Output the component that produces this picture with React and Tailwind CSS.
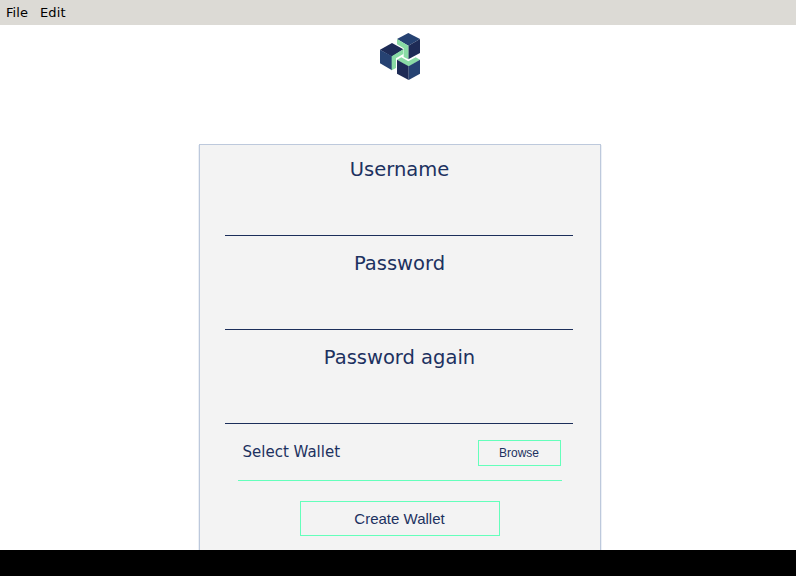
function Logo() {
  return (
    <svg className="block h-[47px] w-10" viewBox="24 20 120 141">
      <path fill="#264272" d="M109 20 144 38 109 58 75 38Z" />
      <path fill="#1e2b56" d="M144 38V80L109 99V58Z" />
      <path fill="#8adba5" d="M75 38 109 58V99L95 92V66L75 54Z" />
      <path fill="#1e2b56" d="M60 50 94 69 60 91 24 70Z" />
      <path fill="#264272" d="M24 70 60 90V132L24 111Z" />
      <path fill="#8adba5" d="M59 90 94 69V83L72 96V125L59 132Z" />
      <path fill="#8adba5" d="M75 100 88 93 109 105 131 93 144 100 110 121Z" />
      <path fill="#1e2b56" d="M75 100 110 120V161L75 142Z" />
      <path fill="#264272" d="M144 100V142L110 161V120Z" />
    </svg>
  );
}

function Field({ label, type = "text" }) {
  return (
    <label className="flex h-[94px] flex-col pt-[13px] text-center text-[19.5px] leading-6">
      <span className="pl-px">{label}</span>
      <input
        type={type}
        className="mt-auto mb-[3px] h-10 w-full border-b border-[#1c2e5a] bg-transparent outline-none"
      />
    </label>
  );
}

export default function App() {
  return (
    <div className="flex h-[576px] w-[796px] flex-col overflow-hidden bg-black font-['DejaVu_Sans',sans-serif]">
      <nav className="flex h-[25px] shrink-0 gap-3 bg-[#dcdad5] pl-1.5 text-[13px] leading-[25px] tracking-[0.08px] text-black">
        <span>File</span>
        <span>Edit</span>
      </nav>
      <main className="h-[525px] overflow-hidden bg-white pt-2 text-[#1c3160]">
        <div className="ml-[380px]">
          <Logo />
        </div>
        <form className="mt-16 ml-[199px] h-[450px] w-[402px] border border-[#bdc9dc] bg-[#f3f3f3] pr-[27px] pl-[25px] shadow-[0_2px_0_1px_#ecf0f6]">
          <Field label="Username" />
          <Field label="Password" type="password" />
          <Field label="Password again" type="password" />
          <div className="ml-[13px] flex h-[54px] w-[324px] items-center justify-between border-b border-[#64ffbb] pr-px pb-0.5 pl-[4.5px] text-[15px]">
            <span>Select Wallet</span>
            <button
              type="button"
              className="h-[26px] w-[83px] border border-[#64ffbb] pr-px font-['Liberation_Sans',sans-serif] text-xs"
            >
              Browse
            </button>
          </div>
          <button
            type="button"
            className="mt-5 ml-[75px] block h-[35px] w-[200px] border border-[#64ffbb] pt-px pr-px font-['Liberation_Sans',sans-serif] text-[15px]"
          >
            Create Wallet
          </button>
        </form>
      </main>
    </div>
  );
}
